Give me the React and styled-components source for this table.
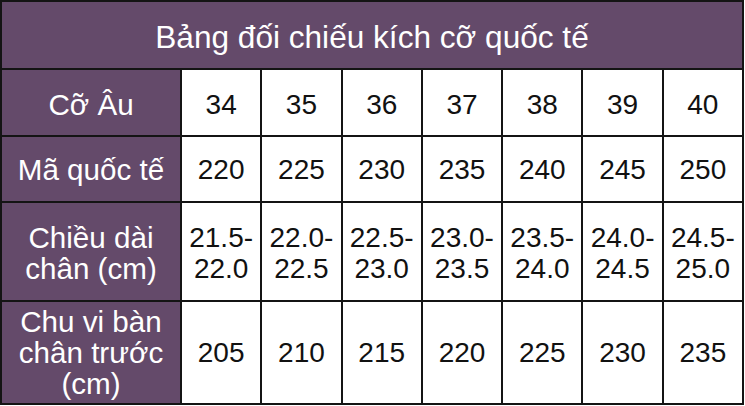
import React from "react";
import styled, { createGlobalStyle } from "styled-components";

const GlobalStyle = createGlobalStyle`
  html, body { margin: 0; padding: 0; background: #ffffff; }
  body { font-family: "Liberation Sans", Arial, sans-serif; }
`;

const PURPLE = "#644a6a";
const LINE = "#141414";

const Table = styled.div`
  width: 744px;
  height: 405px;
  box-sizing: border-box;
  display: grid;
  grid-template-columns: 178px repeat(7, 1fr);
  grid-template-rows: 66px 65px 64px 97px 101px;
  gap: 2px;
  padding: 2px;
  background: ${LINE};
  font-family: "Liberation Sans", Arial, sans-serif;
  font-size: 28px;
  line-height: 31px;
`;

const Cell = styled.div`
  display: flex;
  align-items: center;
  justify-content: center;
  text-align: center;
  box-sizing: border-box;
  padding: ${(p) => p.$shift || 0}px 2px 0;
  white-space: nowrap;
`;

const Title = styled(Cell)`
  grid-column: 1 / -1;
  background: ${PURPLE};
  color: #ffffff;
  font-size: 31.6px;
`;

const Label = styled(Cell)`
  background: ${PURPLE};
  color: #ffffff;
  font-size: 29.6px;
`;

const Value = styled(Cell)`
  background: #ffffff;
  color: #111111;
`;

const Lines = ({ parts }) =>
  parts.map((p, i) => (
    <React.Fragment key={i}>
      {i > 0 && <br />}
      {p}
    </React.Fragment>
  ));

const rows = [
  { label: ["Cỡ Âu"], shift: 4, values: ["34", "35", "36", "37", "38", "39", "40"].map((v) => [v]) },
  { label: ["Mã quốc tế"], shift: 0, values: ["220", "225", "230", "235", "240", "245", "250"].map((v) => [v]) },
  {
    label: ["Chiều dài", "chân (cm)"],
    shift: 2,
    values: [
      ["21.5-", "22.0"],
      ["22.0-", "22.5"],
      ["22.5-", "23.0"],
      ["23.0-", "23.5"],
      ["23.5-", "24.0"],
      ["24.0-", "24.5"],
      ["24.5-", "25.0"],
    ],
  },
  {
    label: ["Chu vi bàn", "chân trước", "(cm)"],
    shift: 0,
    values: ["205", "210", "215", "220", "225", "230", "235"].map((v) => [v]),
  },
];

export default function App() {
  return (
    <>
      <GlobalStyle />
      <Table>
        <Title $shift={4}>Bảng đối chiếu kích cỡ quốc tế</Title>
        {rows.map((r, ri) => (
          <React.Fragment key={ri}>
            <Label $shift={r.shift}>
              <span>
                <Lines parts={r.label} />
              </span>
            </Label>
            {r.values.map((v, vi) => (
              <Value key={vi} $shift={r.shift}>
                <span>
                  <Lines parts={v} />
                </span>
              </Value>
            ))}
          </React.Fragment>
        ))}
      </Table>
    </>
  );
}
